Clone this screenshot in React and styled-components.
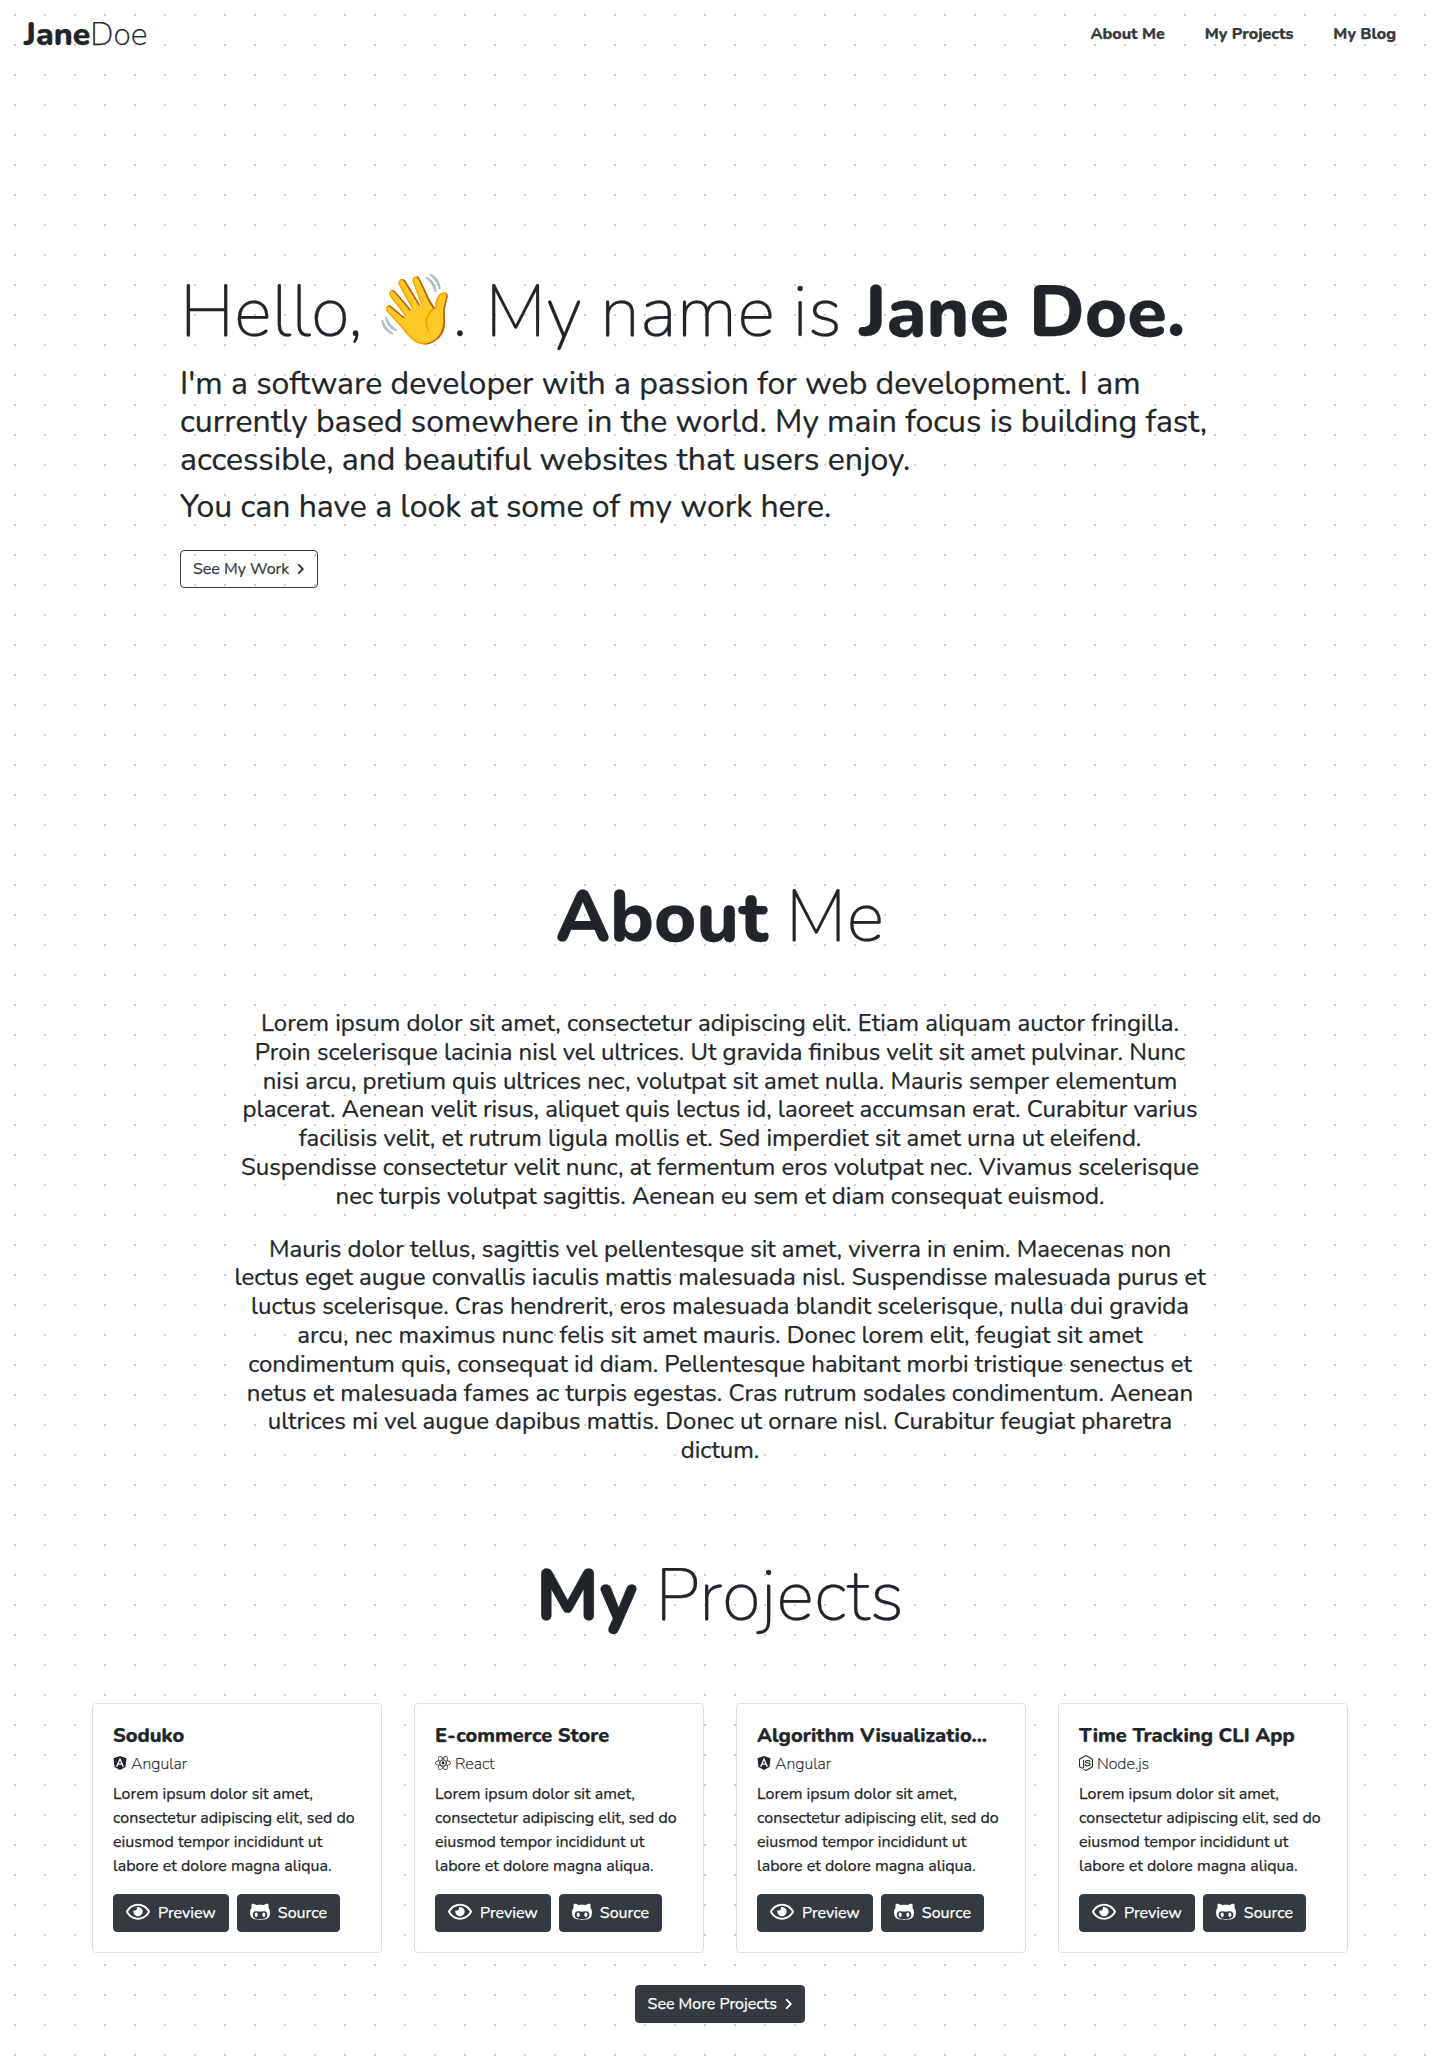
import React from 'react';
import styled, { createGlobalStyle } from 'styled-components';
import { FaAngular, FaChevronRight, FaGithubAlt, FaNodeJs, FaReact, FaRegEye } from 'react-icons/fa';

const GlobalStyle = createGlobalStyle`
  *, *::before, *::after { box-sizing: border-box; }
  body {
    margin: 0;
    font-family: Nunito, Lato, 'Open Sans', sans-serif;
    font-size: 16px;
    line-height: 1.5;
    color: #212529;
    background-color: #fff;
    -webkit-text-stroke: 0.25px currentColor;
  }
  h1, h2, h3, p { margin: 0; }
`;

const Page = styled.div`
  min-height: 2071px;
  background-image: radial-gradient(#cfcfcf 1px, transparent 1px);
  background-size: 30px 30px;
`;

const Navbar = styled.nav`
  height: 70px;
  padding: 11px 44px 0 24px;
  display: flex;
  justify-content: space-between;
`;

const Brand = styled.a`
  font-size: 32px;
  line-height: 48px;
  font-weight: 200;
`;

const Heavy = styled.b`
  font-weight: 800;
`;

const NavLinks = styled.div`
  display: flex;
  gap: 40px;
  padding-top: 11px;
`;

const NavLink = styled.a`
  color: #343a40;
  font-weight: 800;
`;

const Hero = styled.header`
  width: 1080px;
  height: 804px;
  margin: 0 auto;
  padding-top: 199px;
`;

const HeroTitle = styled.h1`
  font-size: 72px;
  font-weight: 200;
  line-height: 1.2;
  height: 86.4px;
  margin-bottom: 9.3px;
  white-space: nowrap;
`;

const Wave = styled.span`
  display: inline-block;
  width: 78px;
  margin-left: -6.5px;
  font-size: 68px;
  line-height: 1;
  font-weight: 400;
  vertical-align: 3px;
`;

const HeroText = styled.p`
  font-size: 32px;
  line-height: 1.2;
  font-weight: 400;
  margin-bottom: 8px;
`;

const Button = styled.a`
  display: inline-flex;
  align-items: center;
  gap: 8px;
  height: 38px;
  padding: 0 12px;
  border: 1px solid #343a40;
  border-radius: 4px;
  line-height: 24px;
  white-space: nowrap;
  color: ${(p) => (p.$outline ? '#343a40' : '#fff')};
  background: ${(p) => (p.$outline ? 'transparent' : '#343a40')};
`;

const HeroAction = styled.div`
  display: flex;
  padding-top: 15.4px;
`;

const SectionTitle = styled.h2`
  font-size: 72px;
  font-weight: 200;
  line-height: 1.2;
  text-align: center;
`;

const About = styled.section`
  height: 679px;
`;

const AboutBody = styled.div`
  width: 972px;
  margin: 48.6px auto 0;
  display: flex;
  flex-direction: column;
  gap: 24px;
  font-size: 24px;
  line-height: 1.2;
  text-align: center;
`;

const Projects = styled.section`
  display: flex;
  flex-direction: column;
  align-items: center;
`;

const CardGrid = styled.div`
  width: 1256px;
  margin: 64px 0 32px;
  display: grid;
  grid-template-columns: repeat(4, 1fr);
  gap: 32px;
`;

const Card = styled.article`
  min-width: 0;
  padding: 20px;
  border: 1px solid #dfdfdf;
  border-radius: 4px;
  background: #fff;
`;

const CardTitle = styled.h3`
  font-size: 20px;
  line-height: 24px;
  font-weight: 800;
  white-space: nowrap;
`;

const Tech = styled.div`
  display: flex;
  align-items: center;
  gap: 4px;
  margin: 4px 0 6px;
  line-height: 24px;
  font-weight: 200;

  svg {
    flex: none;
    width: ${(p) => p.$iconWidth}px;
    height: 16px;
    margin-top: -2px;
  }
`;

const CardText = styled.p`
  margin-bottom: 16px;
`;

const Actions = styled.div`
  display: flex;
  gap: 8px;
`;

const EyeIcon = styled(FaRegEye)`
  width: 24px;
  height: 21.33px;
  margin-top: -3px;
`;

const CatIcon = styled(FaGithubAlt)`
  width: 20px;
  height: 21.33px;
  margin-top: -3px;
`;

const Chevron = styled(FaChevronRight)`
  width: 7.5px;
  height: 12px;
`;

const techIcons = {
  Angular: { Icon: FaAngular, width: 14 },
  React: { Icon: FaReact, width: 16 },
  'Node.js': { Icon: FaNodeJs, width: 14 },
};

const projects = [
  { title: 'Soduko', tech: 'Angular' },
  { title: 'E-commerce Store', tech: 'React' },
  { title: 'Algorithm Visualizatio...', tech: 'Angular' },
  { title: 'Time Tracking CLI App', tech: 'Node.js' },
];

function ProjectCard({ title, tech }) {
  const { Icon, width } = techIcons[tech];
  return (
    <Card>
      <CardTitle>{title}</CardTitle>
      <Tech $iconWidth={width}>
        <Icon />
        {tech}
      </Tech>
      <CardText>
        Lorem ipsum dolor sit amet, consectetur adipiscing elit, sed do eiusmod tempor incididunt ut
        labore et dolore magna aliqua.
      </CardText>
      <Actions>
        <Button>
          <EyeIcon />
          Preview
        </Button>
        <Button>
          <CatIcon />
          Source
        </Button>
      </Actions>
    </Card>
  );
}

export default function App() {
  return (
    <>
      <GlobalStyle />
      <Page>
        <Navbar>
          <Brand>
            <Heavy>Jane</Heavy>Doe
          </Brand>
          <NavLinks>
            <NavLink>About Me</NavLink>
            <NavLink>My Projects</NavLink>
            <NavLink>My Blog</NavLink>
          </NavLinks>
        </Navbar>
        <Hero>
          <HeroTitle>
            Hello, <Wave>👋</Wave>. My name is <Heavy>Jane Doe.</Heavy>
          </HeroTitle>
          <HeroText>
            I'm a software developer with a passion for web development. I am currently based
            somewhere in the world. My main focus is building fast, accessible, and beautiful
            websites that users enjoy.
          </HeroText>
          <HeroText>You can have a look at some of my work here.</HeroText>
          <HeroAction>
            <Button $outline>
              See My Work <Chevron />
            </Button>
          </HeroAction>
        </Hero>
        <About>
          <SectionTitle>
            <Heavy>About</Heavy> Me
          </SectionTitle>
          <AboutBody>
            <p>
              Lorem ipsum dolor sit amet, consectetur adipiscing elit. Etiam aliquam auctor
              fringilla. Proin scelerisque lacinia nisl vel ultrices. Ut gravida finibus velit sit
              amet pulvinar. Nunc nisi arcu, pretium quis ultrices nec, volutpat sit amet nulla.
              Mauris semper elementum placerat. Aenean velit risus, aliquet quis lectus id, laoreet
              accumsan erat. Curabitur varius facilisis velit, et rutrum ligula mollis et. Sed
              imperdiet sit amet urna ut eleifend. Suspendisse consectetur velit nunc, at fermentum
              eros volutpat nec. Vivamus scelerisque nec turpis volutpat sagittis. Aenean eu sem et
              diam consequat euismod.
            </p>
            <p>
              Mauris dolor tellus, sagittis vel pellentesque sit amet, viverra in enim. Maecenas
              non lectus eget augue convallis iaculis mattis malesuada nisl. Suspendisse malesuada
              purus et luctus scelerisque. Cras hendrerit, eros malesuada blandit scelerisque,
              nulla dui gravida arcu, nec maximus nunc felis sit amet mauris. Donec lorem elit,
              feugiat sit amet condimentum quis, consequat id diam. Pellentesque habitant morbi
              tristique senectus et netus et malesuada fames ac turpis egestas. Cras rutrum sodales
              condimentum. Aenean ultrices mi vel augue dapibus mattis. Donec ut ornare nisl.
              Curabitur feugiat pharetra dictum.
            </p>
          </AboutBody>
        </About>
        <Projects>
          <SectionTitle>
            <Heavy>My</Heavy> Projects
          </SectionTitle>
          <CardGrid>
            {projects.map((p) => (
              <ProjectCard key={p.title} {...p} />
            ))}
          </CardGrid>
          <Button>
            See More Projects <Chevron />
          </Button>
        </Projects>
      </Page>
    </>
  );
}
